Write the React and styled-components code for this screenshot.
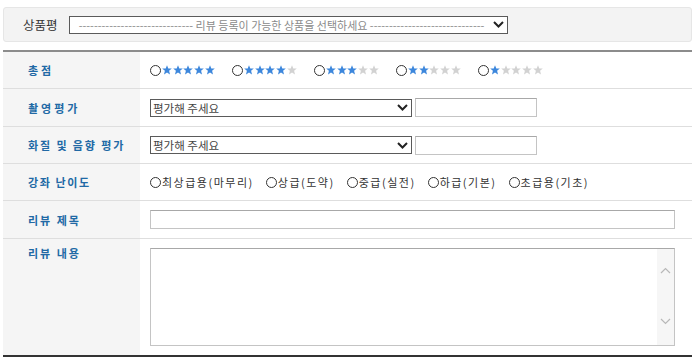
import React from 'react';
import styled, { createGlobalStyle } from 'styled-components';

const GlobalStyle = createGlobalStyle`
    body {
        margin: 0;
        background: #fff;
        font-family: "Noto Sans CJK KR", "Noto Sans", sans-serif;
    }
`;

const Chevron = ({ color = '#222', up = false, bold = false }) => (
    <svg width="11" height="7" viewBox="0 0 11 7">
        <path
            d={up ? 'M1 6 L5.5 1.5 L10 6' : 'M1 1 L5.5 5.5 L10 1'}
            fill="none"
            stroke={color}
            strokeWidth={bold ? 2 : 1.2}
        />
    </svg>
);

const Star = ({ on }) => (
    <svg width="10" height="10" viewBox="0 0 10 10">
        <polygon
            points="5,0.3 6.3,3.5 9.8,3.6 7.1,5.8 8,9.5 5,7.4 2,9.5 2.9,5.8 0.2,3.6 3.7,3.5"
            fill={on ? '#3d87dc' : '#d2d2d2'}
        />
    </svg>
);

const Dropdown = ({ width, center, children }) => (
    <SelectBox $width={width} $center={center} role="combobox">
        <SelectText $center={center}>{children}</SelectText>
        <Chevron bold />
    </SelectBox>
);

export default function App() {
    const scores = [5, 4, 3, 2, 1];
    const levels = ['최상급용(마무리)', '상급(도약)', '중급(실전)', '하급(기본)', '초급용(기초)'];

    return (
        <Page>
            <GlobalStyle />
            <ProductBar>
                <ProductLabel>상품평</ProductLabel>
                <Dropdown width={439} center>
                    ------------------------------ 리뷰 등록이 가능한 상품을 선택하세요 ------------------------------
                </Dropdown>
            </ProductBar>

            <Table>
                <Row $h={37}>
                    <Label $spacing={3}>총점</Label>
                    <Cell>
                        {scores.map((s) => (
                            <StarGroup key={s}>
                                <Radio />
                                {[1, 2, 3, 4, 5].map((i) => <Star key={i} on={i <= s} />)}
                            </StarGroup>
                        ))}
                    </Cell>
                </Row>
                <Row $h={38}>
                    <Label $spacing={3}>촬영평가</Label>
                    <Cell>
                        <Dropdown width={262}>평가해 주세요</Dropdown>
                        <Text $width={122} />
                    </Cell>
                </Row>
                <Row $h={37}>
                    <Label $spacing={1.9}>화질 및 음향 평가</Label>
                    <Cell>
                        <Dropdown width={262}>평가해 주세요</Dropdown>
                        <Text $width={122} />
                    </Cell>
                </Row>
                <Row $h={37}>
                    <Label $spacing={1.6}>강좌 난이도</Label>
                    <Cell>
                        {levels.map((l) => (
                            <Level key={l}>
                                <Radio />
                                {l}
                            </Level>
                        ))}
                    </Cell>
                </Row>
                <Row $h={38}>
                    <Label $spacing={2}>리뷰 제목</Label>
                    <Cell>
                        <Text $width={525} $first />
                    </Cell>
                </Row>
                <Row $h={116} $last>
                    <Label $spacing={2} $top>리뷰 내용</Label>
                    <Cell $top>
                        <AreaBox>
                            <Area />
                            <ScrollTrack>
                                <Chevron up color="#b8b8b8" />
                                <Chevron color="#b8b8b8" />
                            </ScrollTrack>
                        </AreaBox>
                    </Cell>
                </Row>
            </Table>
        </Page>
    );
}

const Page = styled.div`
    width: 689px;
    padding: 7px 0 0 3px;
`;

const ProductBar = styled.div`
    height: 33px;
    display: flex;
    align-items: center;
    background: #f3f3f3;
    border: 1px solid #e6e6e6;
    border-radius: 3px;
`;

const ProductLabel = styled.span`
    width: 65px;
    padding-left: 19px;
    box-sizing: border-box;
    font-size: 12.5px;
    color: #333;
`;

const SelectBox = styled.div`
    width: ${(p) => p.$width}px;
    height: 18px;
    flex: none;
    display: flex;
    align-items: center;
    box-sizing: border-box;
    border: 1px solid #5a5a5a;
    background: #fff;
    padding: 0 3px 0 ${(p) => (p.$center ? '0' : '2px')};
`;

const SelectText = styled.span`
    flex: 1;
    font-size: ${(p) => (p.$center ? '11px' : '11.5px')};
    color: ${(p) => (p.$center ? '#8a8a8a' : '#444')};
    text-align: ${(p) => (p.$center ? 'center' : 'left')};
    white-space: nowrap;
    overflow: hidden;
    line-height: 16px;
`;

const Table = styled.div`
    margin-top: 8px;
    border-top: 2px solid #8c8c8c;
    border-bottom: 2px solid #333;
`;

const Row = styled.div`
    display: flex;
    height: ${(p) => p.$h}px;
    box-sizing: border-box;
    border-bottom: ${(p) => (p.$last ? 'none' : '1px solid #dedede')};
`;

const Label = styled.div`
    width: 137px;
    flex: none;
    background: #f5f5f5;
    box-sizing: border-box;
    padding: ${(p) => (p.$top ? '6px' : '0')} 0 0 25px;
    display: flex;
    align-items: ${(p) => (p.$top ? 'flex-start' : 'center')};
    font-size: 11px;
    font-weight: bold;
    color: #2169a5;
    letter-spacing: ${(p) => p.$spacing}px;
    white-space: pre;
`;

const Cell = styled.div`
    flex: 1;
    display: flex;
    align-items: ${(p) => (p.$top ? 'flex-start' : 'center')};
    padding: ${(p) => (p.$top ? '9px' : '0')} 0 0 10px;
`;

const StarGroup = styled.label`
    display: flex;
    align-items: center;
    width: 82px;
    svg + svg {
        margin-left: 0.7px;
    }
`;

const Radio = styled.input.attrs({ type: 'radio' })`
    appearance: none;
    width: 11px;
    height: 11px;
    margin: 0 1px 0 0;
    border: 1px solid #333;
    border-radius: 50%;
    box-sizing: border-box;
    flex: none;
    background: #fff;
`;

const Level = styled.label`
    display: flex;
    align-items: center;
    margin-right: 12px;
    font-size: 11px;
    letter-spacing: 1.5px;
    color: #333;
`;

const Text = styled.input.attrs({ type: 'text' })`
    width: ${(p) => p.$width}px;
    height: 19px;
    margin-left: ${(p) => (p.$first ? 0 : 3)}px;
    box-sizing: border-box;
    border: 1px solid #c4c4c4;
    border-top-color: #a8a8a8;
`;

const AreaBox = styled.div`
    width: 525px;
    height: 98px;
    display: flex;
    box-sizing: border-box;
    border: 1px solid #c4c4c4;
    border-top-color: #a8a8a8;
`;

const Area = styled.textarea`
    flex: 1;
    border: none;
    resize: none;
    outline: none;
`;

const ScrollTrack = styled.div`
    width: 17px;
    background: #f6f6f6;
    display: flex;
    flex-direction: column;
    align-items: center;
    justify-content: space-between;
    padding: 18px 0 20px;
`;
